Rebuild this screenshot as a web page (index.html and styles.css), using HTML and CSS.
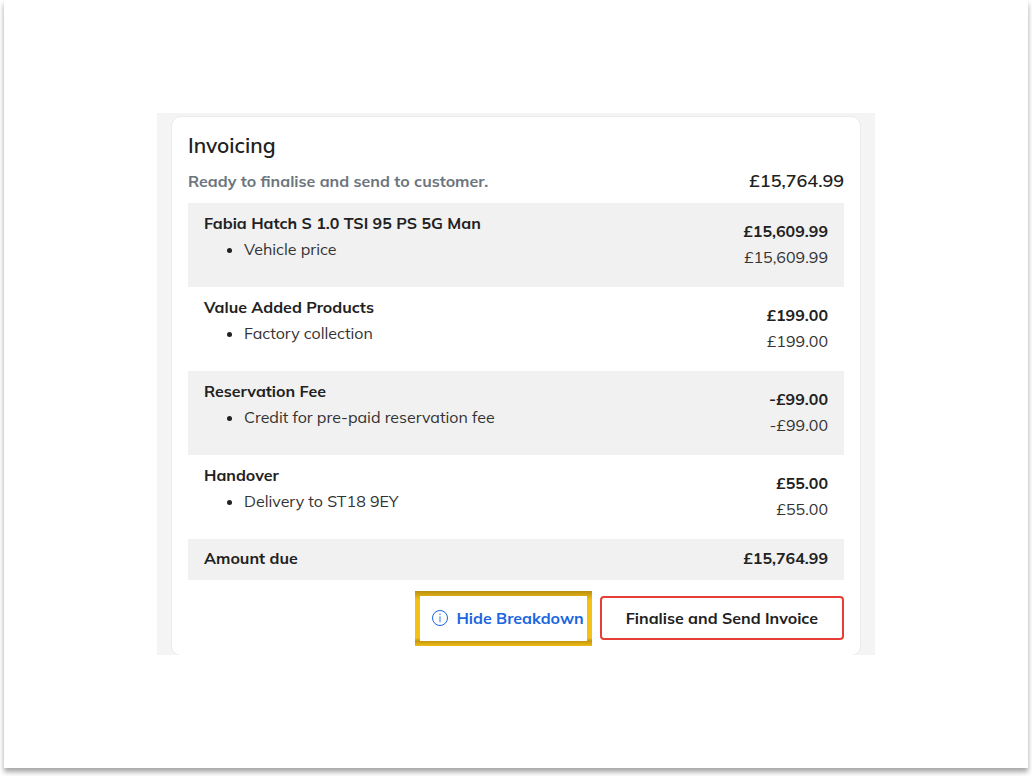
FILE: index.html
```html
<!DOCTYPE html>
<html lang="en">
<head>
  <meta charset="UTF-8" />
  <meta name="viewport" content="width=device-width, initial-scale=1.0"/>
  <title>Invoicing</title>
  <link rel="stylesheet" href="styles.css">
</head>
<body>

<main class="sheet">
  <div class="panel">
    <section class="card">
      <h1>Invoicing</h1>

      <div class="summary">
        <p class="status">Ready to finalise and send to customer.</p>
        <strong class="total">£15,764.99</strong>
      </div>

      <table class="breakdown" id="breakdown">
        <tbody>
          <tr>
            <td>
              <strong>Fabia Hatch S 1.0 TSI 95 PS 5G Man</strong>
              <ul><li>Vehicle price</li></ul>
            </td>
            <td class="amount"><strong>£15,609.99</strong><span>£15,609.99</span></td>
          </tr>
          <tr>
            <td>
              <strong>Value Added Products</strong>
              <ul><li>Factory collection</li></ul>
            </td>
            <td class="amount"><strong>£199.00</strong><span>£199.00</span></td>
          </tr>
          <tr>
            <td>
              <strong>Reservation Fee</strong>
              <ul><li>Credit for pre-paid reservation fee</li></ul>
            </td>
            <td class="amount"><strong>-£99.00</strong><span>-£99.00</span></td>
          </tr>
          <tr>
            <td>
              <strong>Handover</strong>
              <ul><li>Delivery to ST18 9EY</li></ul>
            </td>
            <td class="amount"><strong>£55.00</strong><span>£55.00</span></td>
          </tr>
          <tr>
            <td><strong>Amount due</strong></td>
            <td class="amount"><strong>£15,764.99</strong></td>
          </tr>
        </tbody>
      </table>

      <div class="actions">
        <button type="button" class="toggle" aria-controls="breakdown">
          <svg width="16" height="16" viewBox="0 0 16 16" fill="none" stroke="currentColor" aria-hidden="true">
            <circle cx="8" cy="8" r="7.5"/>
            <path d="M8 6.2v6M8 3.6v1.4" stroke-width="1.2" stroke-opacity="0.75"/>
          </svg>
          Hide Breakdown
        </button>
        <button type="button" class="finalise">Finalise and Send Invoice</button>
      </div>
    </section>
  </div>
</main>

</body>
</html>
```
FILE: styles.css
```css
* {
  box-sizing: border-box;
}

body {
  margin: 0;
  padding: 0 4px 8px;
  background-color: #fefefe;
  color: #212121;
  font-family: Mulish, "Open Sans", sans-serif;
  font-size: 16px;
  font-weight: 400;
  line-height: 26px;
}

.sheet {
  display: flex;
  align-items: center;
  justify-content: center;
  min-height: calc(100vh - 8px);
  background-color: #fff;
  box-shadow: 0 4px 5px rgba(0, 0, 0, 0.35);
}

.panel {
  width: 100%;
  max-width: 718px;
  padding: 3px 14px 0;
  background-color: #f4f4f4;
  overflow: hidden;
}

.card {
  margin-bottom: -1px;
  padding: 15px 16px 9px;
  background-color: #fff;
  border: 1px solid #ebebef;
  border-radius: 10px;
}

h1 {
  margin: 0 0 10px;
  font-size: 21px;
  font-weight: 600;
}

p {
  margin: 0;
}

strong {
  display: block;
  font-weight: 700;
}

.summary {
  display: flex;
  justify-content: space-between;
  margin-bottom: 9px;
}

.status {
  color: #6c757d;
  font-weight: 700;
}

.total {
  font-size: 18px;
  font-weight: 600;
}

.breakdown {
  width: 100%;
  border-collapse: collapse;
}

.breakdown tr:nth-child(odd) {
  background-color: #f1f1f1;
}

.breakdown td {
  padding: 7px 16px 9px;
}

.breakdown tr:last-child td {
  padding: 6px 16px 9px;
}

.breakdown ul {
  margin: 0 0 16px;
  padding-left: 40px;
}

.breakdown li,
.amount span {
  color: #333;
}

.breakdown li::marker {
  color: #212121;
}

.breakdown .amount {
  text-align: right;
}

.amount span {
  display: block;
}

.actions {
  display: flex;
  flex-wrap: wrap;
  align-items: flex-start;
  justify-content: flex-end;
  gap: 8px;
  margin-top: 11px;
}

button {
  font: inherit;
  font-weight: 700;
  background-color: #fff;
  cursor: pointer;
}

.toggle {
  display: flex;
  align-items: center;
  gap: 8px;
  height: 55px;
  padding: 0 3px 2px 12px;
  border: 5px solid transparent;
  background:
    linear-gradient(#fff, #fff) padding-box,
    linear-gradient(#b8900f, #d4a613 4px, #f5c116 9px, #f5c116 47px, #c2980f 50px, #efbb15 55px) border-box;
  color: #1a66e0;
}

.finalise {
  height: 44px;
  margin-top: 5px;
  padding: 0 24px;
  border: 2px solid #e53e35;
  border-radius: 4px;
  color: #212121;
}
```
